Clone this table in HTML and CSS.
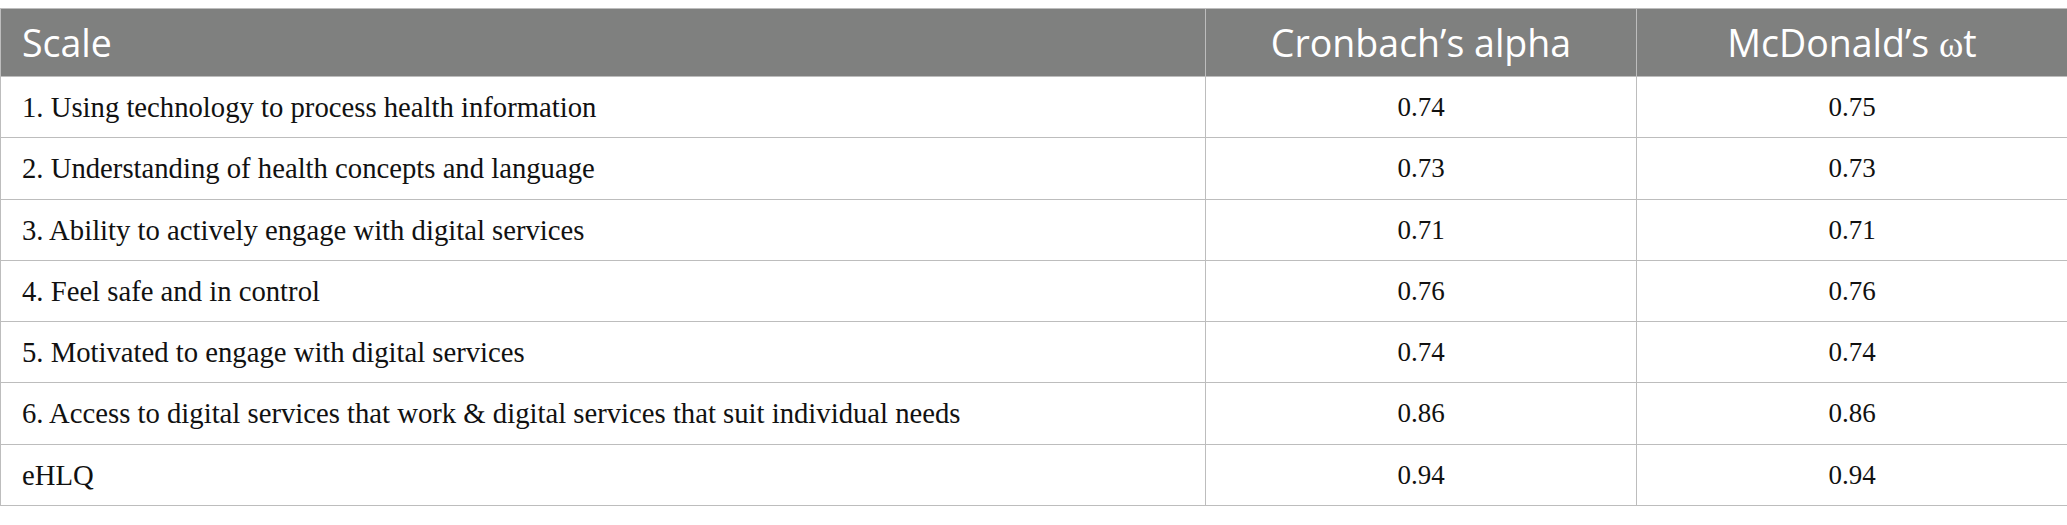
FILE: index.html
```html
<!DOCTYPE html>
<html lang="en">
<head>
<meta charset="utf-8">
<title>Reliability</title>
<link rel="stylesheet" href="styles.css">
</head>
<body>
<table class="rel">
  <colgroup>
    <col class="c-scale">
    <col class="c-num">
    <col class="c-num">
  </colgroup>
  <thead>
    <tr class="head">
      <th class="left">Scale</th>
      <th>Cronbach’s alpha</th>
      <th>McDonald’s <span class="omega">ω</span>t</th>
    </tr>
  </thead>
  <tbody>
    <tr class="r61"><td class="left">1. Using technology to process health information</td><td class="num">0.74</td><td class="num">0.75</td></tr>
    <tr class="r62"><td class="left">2. Understanding of health concepts and language</td><td class="num">0.73</td><td class="num">0.73</td></tr>
    <tr class="r61"><td class="left">3. Ability to actively engage with digital services</td><td class="num">0.71</td><td class="num">0.71</td></tr>
    <tr class="r61"><td class="left">4. Feel safe and in control</td><td class="num">0.76</td><td class="num">0.76</td></tr>
    <tr class="r61"><td class="left">5. Motivated to engage with digital services</td><td class="num">0.74</td><td class="num">0.74</td></tr>
    <tr class="r62"><td class="left">6. Access to digital services that work &amp; digital services that suit individual needs</td><td class="num">0.86</td><td class="num">0.86</td></tr>
    <tr class="r61"><td class="left">eHLQ</td><td class="num">0.94</td><td class="num">0.94</td></tr>
  </tbody>
</table>
</body>
</html>
```

FILE: styles.css
```css
html, body {
  margin: 0;
  padding: 0;
  background: #ffffff;
}
body {
  padding-top: 8px;
}
.rel {
  border-collapse: collapse;
  width: 2066px;
  table-layout: fixed;
  font-family: "Liberation Serif", "Times New Roman", serif;
  color: #111111;
}
.c-scale { width: 1205px; }
.c-num { width: 431px; }
.rel th, .rel td {
  border: 1px solid #bdbdbd;
  padding: 0 21px;
  text-align: center;
  vertical-align: middle;
  white-space: nowrap;
}
.rel .left { text-align: left; }
.head {
  height: 68px;
}
.head th {
  background: #7f807f;
  color: #ffffff;
  font-family: "Open Sans", Lato, sans-serif;
  font-weight: 400;
  font-size: 37.5px;
}
.omega {
  font-family: "Liberation Serif", serif;
  font-size: 37px;
}
.rel td {
  font-size: 28.7px;
}
.rel td.num {
  font-size: 27px;
}
.r61 { height: 61px; }
.r62 { height: 62px; }
```
